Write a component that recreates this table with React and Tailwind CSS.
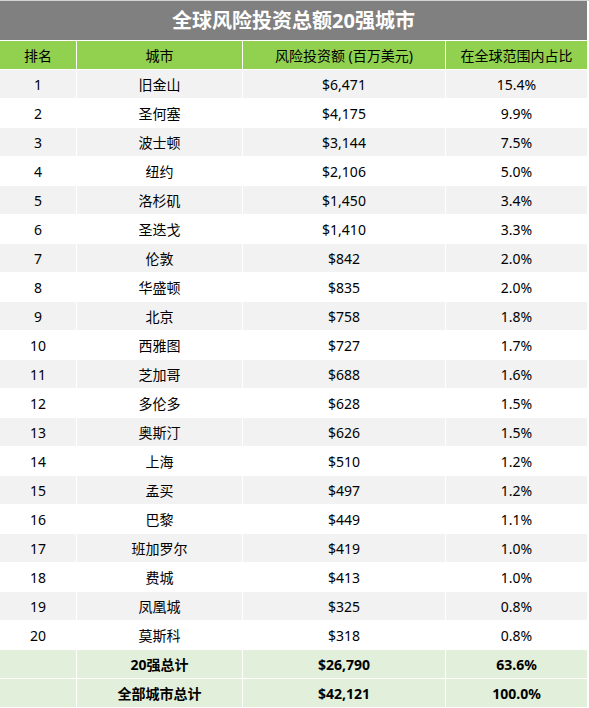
import { Fragment } from "react";

const rows = [
  [1, "旧金山", "$6,471", "15.4%"],
  [2, "圣何塞", "$4,175", "9.9%"],
  [3, "波士顿", "$3,144", "7.5%"],
  [4, "纽约", "$2,106", "5.0%"],
  [5, "洛杉矶", "$1,450", "3.4%"],
  [6, "圣迭戈", "$1,410", "3.3%"],
  [7, "伦敦", "$842", "2.0%"],
  [8, "华盛顿", "$835", "2.0%"],
  [9, "北京", "$758", "1.8%"],
  [10, "西雅图", "$727", "1.7%"],
  [11, "芝加哥", "$688", "1.6%"],
  [12, "多伦多", "$628", "1.5%"],
  [13, "奥斯汀", "$626", "1.5%"],
  [14, "上海", "$510", "1.2%"],
  [15, "孟买", "$497", "1.2%"],
  [16, "巴黎", "$449", "1.1%"],
  [17, "班加罗尔", "$419", "1.0%"],
  [18, "费城", "$413", "1.0%"],
  [19, "凤凰城", "$325", "0.8%"],
  [20, "莫斯科", "$318", "0.8%"],
];

const totals = [
  ["20强总计", "$26,790", "63.6%"],
  ["全部城市总计", "$42,121", "100.0%"],
];

export default function App() {
  return (
    <div
      className="w-[589px] h-[708px] bg-white border-t border-[#d4d4d4] overflow-hidden text-black"
      style={{ fontFamily: '"Noto Sans", "Noto Sans CJK SC", sans-serif' }}
    >
      <div className="w-[587px] grid grid-cols-[76px_165px_202px_141px] gap-px bg-white">
        <div className="col-span-4 h-[39px] bg-[#808080] flex items-center justify-center text-white text-[20px] font-bold">
          全球风险投资总额20强城市
        </div>
        {["排名", "城市", "风险投资额 (百万美元)", "在全球范围内占比"].map(h => (
          <div key={h} className="h-[28px] bg-[#92d050] flex items-center justify-center text-[14px]">
            {h}
          </div>
        ))}
        {rows.map((r, i) => (
          r.map((c, j) => (
            <div
              key={`${i}-${j}`}
              className={`h-[28px] flex items-center justify-center text-[14px] ${i % 2 === 0 ? "bg-[#f2f2f2]" : "bg-white"}`}
            >
              {c}
            </div>
          ))
        ))}
        {totals.map(t => (
          <Fragment key={t[0]}>
            <div className="h-[28px] bg-[#e2efda]" />
            {t.map(c => (
              <div key={c} className="h-[28px] bg-[#e2efda] flex items-center justify-center text-[14px] font-bold">
                {c}
              </div>
            ))}
          </Fragment>
        ))}
      </div>
    </div>
  );
}
